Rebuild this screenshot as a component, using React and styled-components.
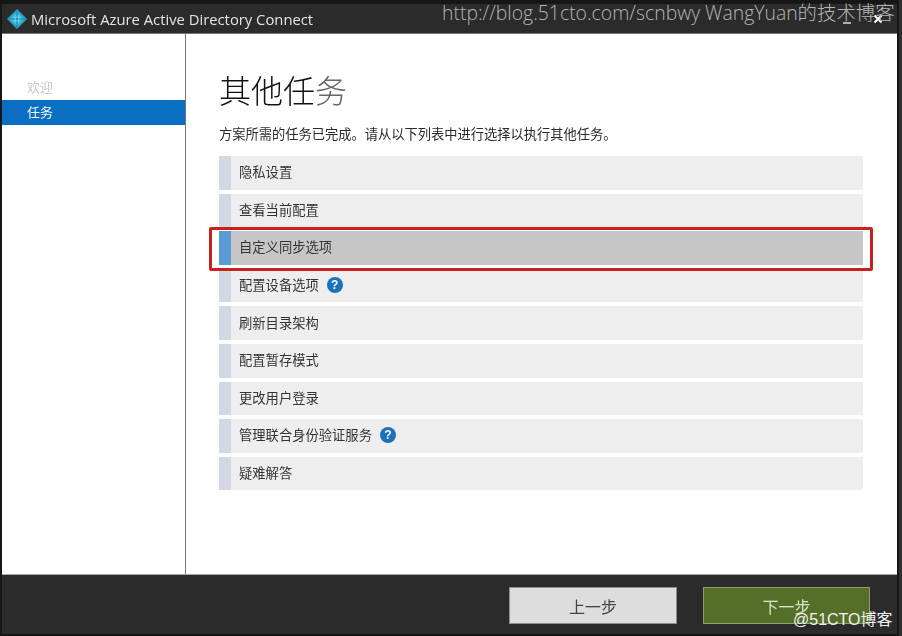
import React from 'react'
import styled, { createGlobalStyle } from 'styled-components'

const GlobalStyle = createGlobalStyle`
    html, body {
        margin: 0;
        padding: 0;
        background: #161616;
    }
    * {
        box-sizing: border-box;
    }
`

const cjk = `"Noto Sans CJK SC", "Noto Sans", sans-serif`

const Page = styled.div`
    position: relative;
    width: 902px;
    height: 636px;
    padding: 4px 2px 2px 2px;
    overflow: hidden;
    background: #161616;
    border-right: 3px solid #303030;
    font-family: ${cjk};
`

const Window = styled.div`
    display: flex;
    flex-direction: column;
    height: 100%;
    background: #fff;
    filter: blur(0.35px);
`

const TitleBar = styled.div`
    display: flex;
    align-items: center;
    gap: 3px;
    height: 30px;
    padding: 0 14px 0 5px;
    background: #2b2b2b;
    border-bottom: 1px solid #777;
    color: #e4e4e4;
`

const LogoMark = styled.svg`
    width: 20px;
    height: 20px;
    margin-top: 1px;
    flex: none;
`

const AppName = styled.span`
    flex: 1;
    margin-left: 1px;
    font-family: "Open Sans", sans-serif;
    font-size: 14.8px;
    white-space: nowrap;
`

const WindowButton = styled.span`
    width: 10px;
    height: 10px;
    margin-left: 18px;
    display: flex;
    align-items: center;
    justify-content: center;
`

const Body = styled.div`
    flex: 1;
    display: flex;
    min-height: 0;
`

const Sidebar = styled.nav`
    width: 184px;
    padding-top: 41px;
    border-right: 1.5px solid #777;
`

const NavItem = styled.div`
    height: 25px;
    padding-left: 25px;
    line-height: 24px;
    font-size: 13px;
    background: ${({ $active }) => ($active ? '#0a6fc2' : 'transparent')};
    color: ${({ $active }) => ($active ? '#f2f7fb' : '#c9c9c9')};
`

const Content = styled.main`
    flex: 1;
    padding: 32px 33px 0 33px;
`

const Heading = styled.h1`
    margin: 0;
    height: 46px;
    font-size: 32px;
    font-weight: 300;
    line-height: 46px;
    color: #111;
`

const FadedChar = styled.span`
    color: #666;
`

const Intro = styled.p`
    margin: 11px 0 0;
    height: 22px;
    font-size: 13.25px;
    line-height: 22px;
    color: #2a2a2a;
`

const TaskList = styled.div`
    display: flex;
    flex-direction: column;
    gap: 4px;
    margin-top: 11px;
    width: 644px;
`

const Task = styled.div`
    position: relative;
    z-index: ${({ $selected }) => ($selected ? 1 : 0)};
    display: flex;
    align-items: center;
    gap: 8px;
    height: 33.6px;
    padding: 0 0 2px 8px;
    font-size: 13.3px;
    color: #333;
    background: ${({ $selected }) => ($selected ? '#c6c6c6' : '#eeeeee')};
    border-left: 12px solid ${({ $selected }) => ($selected ? '#5b9bd5' : '#d2d9e4')};
`

const Highlight = styled.div`
    position: absolute;
    top: -4px;
    bottom: -6px;
    left: -22px;
    right: -10px;
    border: 3px solid #c9221c;
    border-radius: 2px;
`

const HelpBadge = styled.span`
    width: 16px;
    height: 16px;
    border-radius: 50%;
    background: #1b72b8;
    color: #fff;
    font-family: "Liberation Sans", sans-serif;
    font-size: 12px;
    font-weight: 700;
    line-height: 16px;
    text-align: center;
`

const Footer = styled.div`
    display: flex;
    justify-content: flex-end;
    align-items: flex-start;
    gap: 26px;
    height: 60px;
    padding: 12px 27px 0 0;
    background: #2b2b2b;
    border-top: 1px solid #a8a8a8;
`

const WizardButton = styled.button`
    width: ${({ $primary }) => ($primary ? '167px' : '168px')};
    height: 37px;
    padding: 0;
    font-family: ${cjk};
    font-size: 16px;
    background: ${({ $primary }) => ($primary ? '#566f28' : '#dddddd')};
    border: 1px solid ${({ $primary }) => ($primary ? '#8ba070' : '#8d8d8d')};
    color: ${({ $primary }) => ($primary ? '#d9e3c8' : '#444')};
`

const UrlMark = styled.div`
    position: absolute;
    top: -3px;
    left: 442px;
    font-family: "Open Sans", ${cjk};
    font-size: 19.4px;
    font-weight: 300;
    white-space: nowrap;
    color: #b4b4b4;
`

const SiteMark = styled.div`
    position: absolute;
    top: 606px;
    left: 793px;
    font-family: "Liberation Sans", ${cjk};
    font-size: 16px;
    white-space: nowrap;
    color: #f0f0f0;
`

const tasks = [
    { label: '隐私设置' },
    { label: '查看当前配置' },
    { label: '自定义同步选项', selected: true },
    { label: '配置设备选项', help: true },
    { label: '刷新目录架构' },
    { label: '配置暂存模式' },
    { label: '更改用户登录' },
    { label: '管理联合身份验证服务', help: true },
    { label: '疑难解答' },
]

function AzureLogo()
{
    return (
        <LogoMark viewBox="0 0 21 21">
            <path d="M10.5 0 21 10.5 10.5 21 0 10.5Z" fill="#2f9fc6" />
            <path d="M10.5 3 18 10.5 10.5 18 3 10.5Z" fill="#35c3e6" />
            <path d="M10.5 6.5 14.5 10.5 10.5 14.5 6.5 10.5Z" fill="#8fe6f7" />
            <path d="M10.5 2V19M2 10.5H19" stroke="#17779c" strokeWidth="1" />
        </LogoMark>
    )
}

export default function App()
{
    return (
        <>
            <GlobalStyle />
            <Page>
                <Window>
                    <TitleBar>
                        <AzureLogo />
                        <AppName>Microsoft Azure Active Directory Connect</AppName>
                        <WindowButton>
                            <svg width="10" height="10" viewBox="0 0 10 10">
                                <path d="M1 9H9" stroke="#ddd" strokeWidth="1.5" />
                            </svg>
                        </WindowButton>
                        <WindowButton>
                            <svg width="10" height="10" viewBox="0 0 10 10">
                                <path d="M1.5 1.5 8.5 8.5M8.5 1.5 1.5 8.5" stroke="#fff" strokeWidth="2" />
                            </svg>
                        </WindowButton>
                    </TitleBar>
                    <Body>
                        <Sidebar>
                            <NavItem>欢迎</NavItem>
                            <NavItem $active>任务</NavItem>
                        </Sidebar>
                        <Content>
                            <Heading>其他任<FadedChar>务</FadedChar></Heading>
                            <Intro>方案所需的任务已完成。请从以下列表中进行选择以执行其他任务。</Intro>
                            <TaskList>
                                {tasks.map((task) => (
                                    <Task key={task.label} $selected={task.selected}>
                                        {task.label}
                                        {task.help && <HelpBadge>?</HelpBadge>}
                                        {task.selected && <Highlight />}
                                    </Task>
                                ))}
                            </TaskList>
                        </Content>
                    </Body>
                    <Footer>
                        <WizardButton>上一步</WizardButton>
                        <WizardButton $primary>下一步</WizardButton>
                    </Footer>
                </Window>
                <UrlMark>http://blog.51cto.com/scnbwy WangYuan的技术博客</UrlMark>
                <SiteMark>@51CTO博客</SiteMark>
            </Page>
        </>
    )
}
